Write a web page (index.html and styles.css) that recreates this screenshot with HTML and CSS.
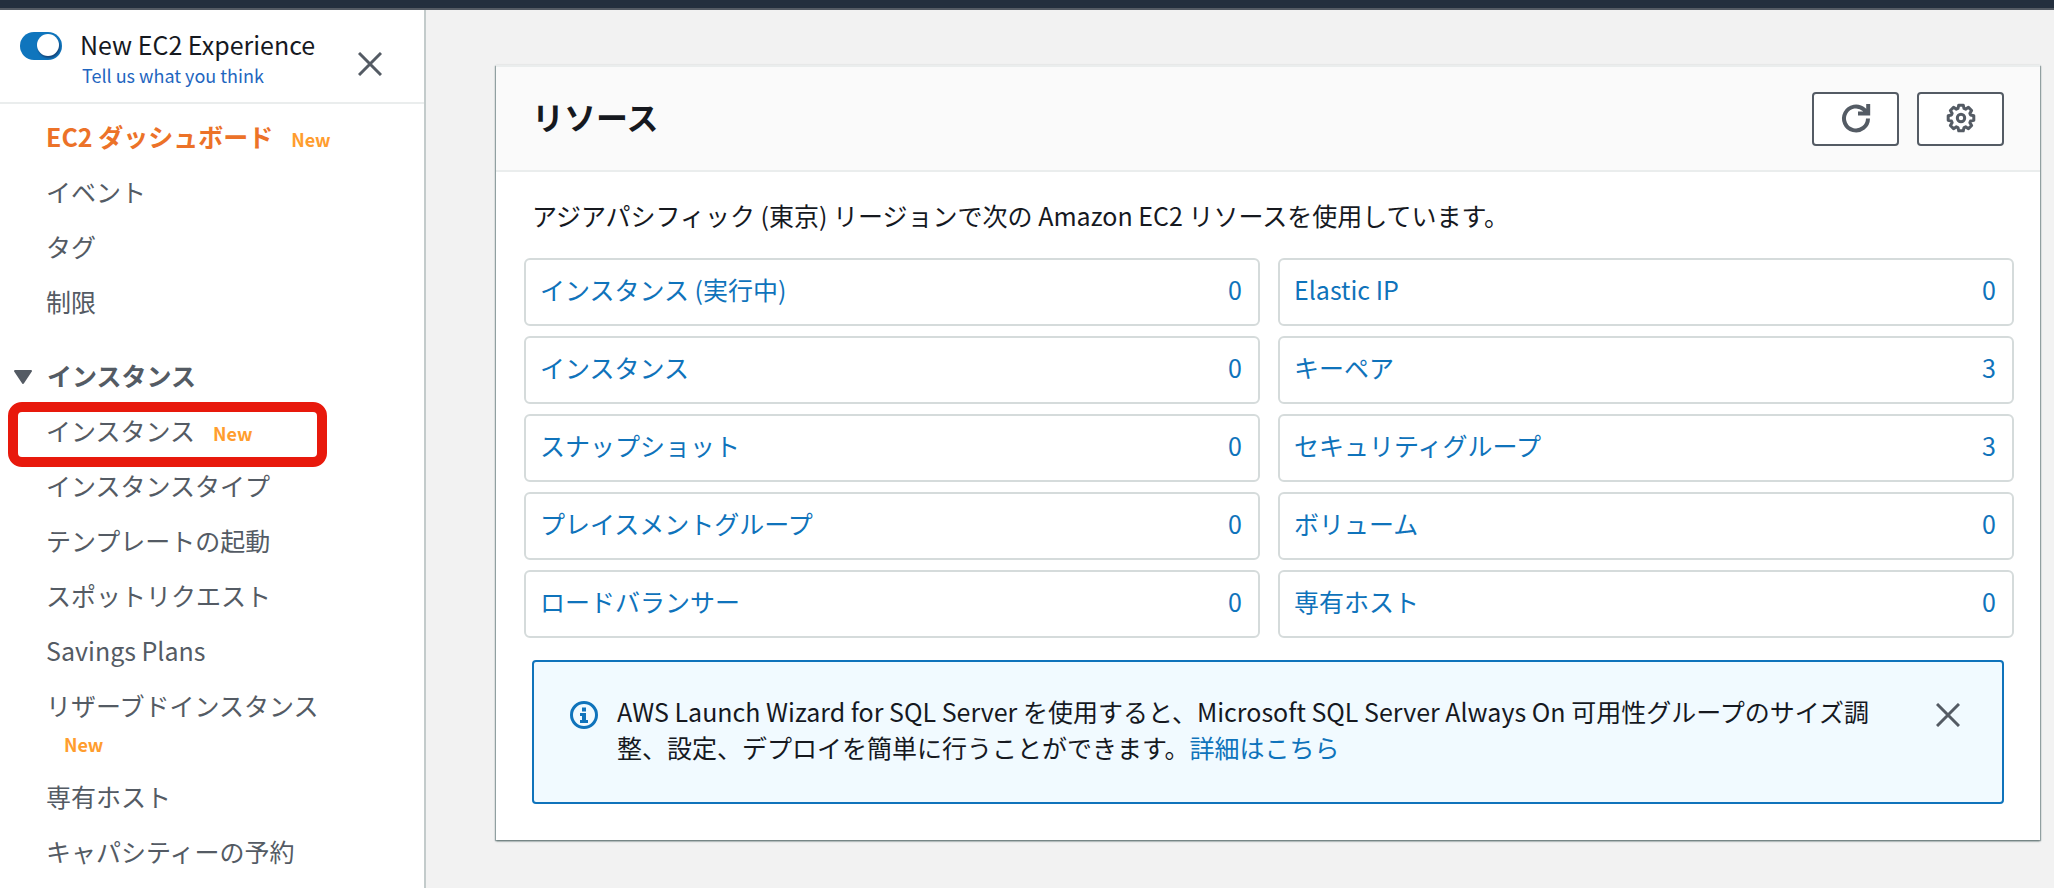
FILE: index.html
```
<!DOCTYPE html>
<html lang="ja">
<head>
<meta charset="utf-8">
<title>EC2 Management Console</title>
<link rel="stylesheet" href="styles.css">
</head>
<body>
<div class="topbar"></div>
<div class="layout">
    <aside class="sidebar">
        <div class="experience">
            <input type="checkbox" class="toggle" id="newExp" checked>
            <div class="exp-text">
                <label for="newExp">New EC2 Experience</label>
                <a href="#">Tell us what you think</a>
            </div>
            <button type="button" class="close" aria-label="閉じる">
                <svg width="24" height="24" viewBox="0 0 24 24"><path d="M1 1L23 23M23 1L1 23"/></svg>
            </button>
        </div>
        <nav>
            <ul class="menu">
                <li><a href="#" class="active">EC2 ダッシュボード</a><span class="new">New</span></li>
                <li><a href="#">イベント</a></li>
                <li><a href="#">タグ</a></li>
                <li><a href="#">制限</a></li>
            </ul>
            <button type="button" class="section">
                <svg width="20" height="15" viewBox="0 0 20 15"><path d="M2 1H18L10 13Z"/></svg>
                インスタンス
            </button>
            <ul class="menu">
                <li class="marked"><a href="#">インスタンス</a><span class="new">New</span></li>
                <li><a href="#">インスタンスタイプ</a></li>
                <li><a href="#">テンプレートの起動</a></li>
                <li><a href="#">スポットリクエスト</a></li>
                <li><a href="#">Savings Plans</a></li>
                <li><a href="#">リザーブドインスタンス</a><span class="new">New</span></li>
                <li><a href="#">専有ホスト</a></li>
                <li><a href="#">キャパシティーの予約</a></li>
            </ul>
        </nav>
    </aside>
    <main class="main">
        <section class="card">
            <div class="card-head">
                <h2>リソース</h2>
                <div class="actions">
                    <button type="button" class="btn" aria-label="更新">
                        <svg width="32" height="32" viewBox="0 0 32 32"><path d="M28 15.500A12 12 0 1 1 24 6.500L27 10M28.200 1V10.500H18"/></svg>
                    </button>
                    <button type="button" class="btn" aria-label="設定">
                        <svg width="32" height="32" viewBox="0 0 32 32"><path d="M28.800 12.740V17.260L25.540 18L24.870 19.620L26.650 22.460L23.460 25.650L20.620 23.870L19 24.540L18.260 27.800H13.740L13 24.540L11.380 23.870L8.540 25.650L5.350 22.460L7.130 19.620L6.460 18L3.200 17.260V12.740L6.460 12L7.130 10.380L5.350 7.540L8.540 4.350L11.380 6.130L13 5.460L13.740 2.200H18.260L19 5.460L20.620 6.130L23.460 4.350L26.650 7.540L24.870 10.380L25.540 12Z"/><circle cx="16" cy="15" r="3.700"/></svg>
                    </button>
                </div>
            </div>
            <div class="card-body">
                <p class="intro">アジアパシフィック (東京) リージョンで次の Amazon EC2 リソースを使用しています。</p>
                <div class="tiles">
                    <a href="#" class="tile"><span>インスタンス (実行中)</span><span>0</span></a>
                    <a href="#" class="tile"><span>Elastic IP</span><span>0</span></a>
                    <a href="#" class="tile"><span>インスタンス</span><span>0</span></a>
                    <a href="#" class="tile"><span>キーペア</span><span>3</span></a>
                    <a href="#" class="tile"><span>スナップショット</span><span>0</span></a>
                    <a href="#" class="tile"><span>セキュリティグループ</span><span>3</span></a>
                    <a href="#" class="tile"><span>プレイスメントグループ</span><span>0</span></a>
                    <a href="#" class="tile"><span>ボリューム</span><span>0</span></a>
                    <a href="#" class="tile"><span>ロードバランサー</span><span>0</span></a>
                    <a href="#" class="tile"><span>専有ホスト</span><span>0</span></a>
                </div>
                <div class="info">
                    <svg class="info-icon" width="30" height="30" viewBox="0 0 30 30"><circle cx="15" cy="15" r="12.500"/><path d="M13 7.500h4v4h-4zM11 13h6v7h2v3h-8v-3h2v-4h-2z"/></svg>
                    <p>AWS Launch Wizard for SQL Server を使用すると、Microsoft SQL Server Always On 可用性グループのサイズ調整、設定、デプロイを簡単に行うことができます。<a href="#">詳細はこちら</a></p>
                    <button type="button" class="close" aria-label="閉じる">
                        <svg width="24" height="24" viewBox="0 0 24 24"><path d="M1 1L23 23M23 1L1 23"/></svg>
                    </button>
                </div>
            </div>
        </section>
    </main>
</div>
</body>
</html>
```
FILE: styles.css
```
*,*::before,*::after{box-sizing:border-box;}
body{margin:0;min-height:100vh;display:flex;flex-direction:column;background:#f2f2f2;color:#16191f;font:25px/36px "Noto Sans CJK JP",sans-serif;}
a{color:#0f73bb;text-decoration:none;}
button{font:inherit;cursor:pointer;}
svg{display:block;fill:none;}
p,h2,ul{margin:0;padding:0;}

.topbar{height:10px;background:#232f3e;border-bottom:2px solid #545b64;}
.layout{display:flex;flex:1;}

/* sidebar */
.sidebar{width:426px;flex:none;background:#fff;border-right:2px solid #c3cbcb;}
.experience{display:flex;align-items:flex-start;height:94px;padding:16px 38px 0 20px;border-bottom:2px solid #eaeded;}
.toggle{appearance:none;width:42px;height:28px;margin:6px 18px 0 0;border-radius:14px;background:#0f75bd;cursor:pointer;}
.toggle::before{content:"";display:block;width:22px;height:22px;margin:2px 0 0 17px;border-radius:50%;background:#fff;box-shadow:1px 2px 2px #16467a;}
.toggle:not(:checked)::before{margin-left:3px;}
.exp-text{display:flex;flex-direction:column;flex:1;}
.exp-text a{padding-left:2px;font-size:18px;line-height:26px;color:#1f66c0;}
.close{padding:0;border:0;background:none;}
.close svg{stroke:#545b64;stroke-width:3;}
.experience .close{margin-top:26px;padding:0 4px;}
.menu{list-style:none;display:flex;flex-direction:column;gap:19px;padding:0 90px 0 46px;}
.menu a{color:#545b64;}
.menu .active{color:#ec7228;font-weight:bold;}
.new{margin-left:18px;color:#ff9d2e;font-size:18px;line-height:20px;font-weight:bold;}
nav{padding-top:14px;}
.section{display:flex;align-items:center;gap:14px;margin:38px 0 19px 13px;padding:0;border:0;background:none;color:#545b64;font-weight:bold;line-height:36px;}
.section svg{margin-top:4px;fill:#545b64;stroke:#545b64;stroke-width:2;stroke-linejoin:round;}
.marked{position:relative;}
.marked::after{content:"";position:absolute;left:-38px;top:-10px;width:319px;height:65px;border:10px solid #e8190c;border-radius:14px;pointer-events:none;}

/* resource card */
.main{flex:1;min-width:0;padding:55px 14px 0 70px;}
.card{background:#fff;border-top:2px solid #eaeded;box-shadow:0 1px 2px #5f7070,1px 1px 1px #aab7b8,-1px 1px 1px #aab7b8;}
.card-head{display:flex;justify-content:space-between;align-items:flex-start;height:105px;padding:25px 36px 0;background:#fafafa;border-bottom:2px solid #eaeded;}
.card-head h2{font-size:32px;line-height:48px;}
.actions{display:flex;gap:18px;}
.btn{display:flex;justify-content:center;align-items:center;width:87px;height:54px;padding:0;background:#fff;border:2px solid #545b64;border-radius:4px;}
.btn svg{stroke:#545b64;stroke-width:4;}
.btn:last-child svg{stroke-width:3;stroke-linejoin:round;}
.card-body{padding:25px 36px 36px;}
.tiles{display:grid;grid-template-columns:1fr 1fr;gap:10px 18px;margin:25px -10px 22px -8px;}
.tile{display:flex;justify-content:space-between;height:68px;padding:11px 16px 17px 14px;border:2px solid #d5dbdb;border-radius:6px;}
.info{display:flex;align-items:flex-start;padding:31px 42px 37px 35px;background:#f1faff;border:2px solid #0f73bb;border-radius:4px;}
.info p{flex:1;margin:0 60px 0 18px;}
.info-icon{margin-top:7px;stroke:#0f73bb;stroke-width:3;}
.info-icon path{fill:#0f73bb;stroke:none;}
.info .close{margin-top:10px;}
```
